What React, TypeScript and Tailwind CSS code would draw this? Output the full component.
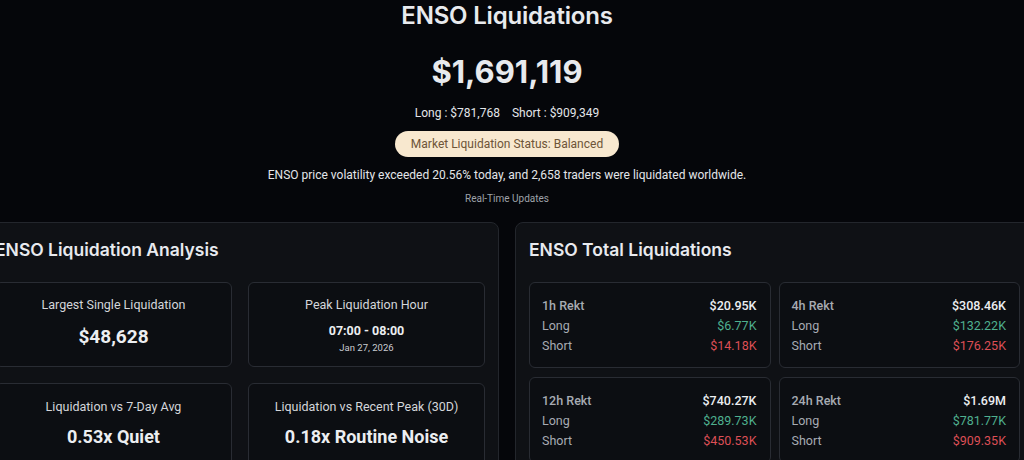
const BODY = { fontFamily: "Roboto, 'Liberation Sans', sans-serif" };
const HEAD = { fontFamily: "Inter, 'Noto Sans', sans-serif" };

type Rekt = { period: string; total: string; long: string; short: string };

const REKT: Rekt[] = [
  { period: "1h Rekt", total: "$20.95K", long: "$6.77K", short: "$14.18K" },
  { period: "4h Rekt", total: "$308.46K", long: "$132.22K", short: "$176.25K" },
  { period: "12h Rekt", total: "$740.27K", long: "$289.73K", short: "$450.53K" },
  { period: "24h Rekt", total: "$1.69M", long: "$781.77K", short: "$909.35K" },
];

export default function App() {
  return (
    <div
      className="h-[460px] w-[1024px] overflow-hidden bg-[#05060a] text-[#e6e8ec]"
      style={BODY}
    >
      <div className="ml-[-19px] flex w-[1052px] flex-col items-center">
        {/* Header */}
        <h1
          className="text-[24px] font-semibold leading-8 tracking-[-0.2px] text-[#e8eaee]"
          style={HEAD}
        >
          ENSO Liquidations
        </h1>
        <div className="mt-[22px] text-[31px] font-bold leading-9 text-[#e8eaee]" style={HEAD}>
          $1,691,119
        </div>
        <div className="mt-[15px] flex gap-3 text-[12px] leading-4 text-[#e3e5e9]">
          <span>Long : $781,768</span>
          <span>Short : $909,349</span>
        </div>
        <div className="mt-[10px] flex h-[26px] items-center rounded-full bg-[#f8e8cf] px-4 text-[12px] text-[#6e5538]">
          Market Liquidation Status: Balanced
        </div>
        <p className="mt-[9px] text-[12px] leading-[18px] text-[#e3e5e9]">
          ENSO price volatility exceeded 20.56% today, and 2,658 traders were liquidated worldwide.
        </p>
        <p className="mt-2 text-[10px] leading-[14px] text-[#9ea2a9]">Real-Time Updates</p>

        {/* Panels */}
        <div className="mt-4 grid w-full grid-cols-2 gap-4">
          <section className="h-[260px] rounded-lg border border-[#23262c] bg-[#0f1115] px-[13px] pt-[13px]">
            <h2 className="text-[17.5px] font-semibold leading-7 text-[#e8eaee]" style={HEAD}>
              ENSO Liquidation Analysis
            </h2>
            <div className="mt-[18px] grid grid-cols-2 gap-4">
              <div className="flex h-[85px] flex-col items-center rounded-md border border-[#292c33] bg-[#0c0e12] pt-3">
                <span className="text-[12.5px] leading-5 text-[#d4d6da]">Largest Single Liquidation</span>
                <span className="mt-2 text-[19px] font-bold leading-7 text-[#eceef1]">$48,628</span>
              </div>
              <div className="flex h-[85px] flex-col items-center rounded-md border border-[#292c33] bg-[#0c0e12] pt-3">
                <span className="text-[12.5px] leading-5 text-[#d4d6da]">Peak Liquidation Hour</span>
                <span className="mt-2 text-[12.5px] font-bold leading-4 text-[#eceef1]">07:00 - 08:00</span>
                <span className="mt-[3px] text-[9.5px] leading-3 text-[#c9cbd0]">Jan 27, 2026</span>
              </div>
              <div className="flex h-[85px] flex-col items-center rounded-md border border-[#292c33] bg-[#0c0e12] pt-[13px]">
                <span className="text-[12.5px] leading-5 text-[#d4d6da]">Liquidation vs 7-Day Avg</span>
                <span className="mt-[7px] text-[18px] font-bold leading-[26px] text-[#eceef1]">0.53x Quiet</span>
              </div>
              <div className="flex h-[85px] flex-col items-center rounded-md border border-[#292c33] bg-[#0c0e12] pt-[13px]">
                <span className="text-[12.5px] leading-5 text-[#d4d6da]">Liquidation vs Recent Peak (30D)</span>
                <span className="mt-[7px] text-[18px] font-bold leading-[26px] text-[#eceef1]">0.18x Routine Noise</span>
              </div>
            </div>
          </section>

          <section className="h-[260px] rounded-lg border border-[#23262c] bg-[#0f1115] pl-[13px] pr-[12px] pt-[13px]">
            <h2 className="text-[17.5px] font-semibold leading-7 text-[#e8eaee]" style={HEAD}>
              ENSO Total Liquidations
            </h2>
            <div className="mt-[18px] grid grid-cols-2 gap-x-2 gap-y-[9px]">
              {REKT.map((r) => (
                <div
                  key={r.period}
                  className="flex h-[86px] flex-col rounded-md border border-[#292c33] bg-[#0c0e12] pl-3 pr-[13px] pt-[13px] text-[12.5px] leading-5"
                >
                  <div className="flex justify-between">
                    <span className="font-medium text-[#a7abb2]">{r.period}</span>
                    <span className="font-medium text-[#eceef1]">{r.total}</span>
                  </div>
                  <div className="flex justify-between">
                    <span className="text-[#a7abb2]">Long</span>
                    <span className="text-[#4fb08f]">{r.long}</span>
                  </div>
                  <div className="flex justify-between">
                    <span className="text-[#a7abb2]">Short</span>
                    <span className="text-[#dd4f56]">{r.short}</span>
                  </div>
                </div>
              ))}
            </div>
          </section>
        </div>
      </div>
    </div>
  );
}
